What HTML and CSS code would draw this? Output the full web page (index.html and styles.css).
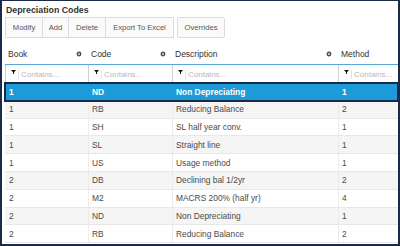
FILE: index.html
```html
<html>
	<head>
		<title>Depreciation Codes</title>
		<link rel="stylesheet" href="styles.css">
	</head>
	<body>
		<div class="frame">
			<div class="panel-title">Depreciation Codes</div>
			<div class="toolbar">
				<div class="btn-group">
					<div class="btn btn-modify">Modify</div>
					<div class="btn btn-add">Add</div>
					<div class="btn btn-delete">Delete</div>
					<div class="btn btn-export">Export To Excel</div>
				</div>
				<div class="btn btn-single">Overrides</div>
			</div>

			<div class="grid">
				<div class="grid-header">
					<div class="head-cell">Book <svg class="gear" width="6" height="6" viewBox="0 0 6 6"><circle cx="3" cy="3" r="1.8"></circle></svg></div>
					<div class="head-cell">Code <svg class="gear" width="6" height="6" viewBox="0 0 6 6"><circle cx="3" cy="3" r="1.8"></circle></svg></div>
					<div class="head-cell">Description <svg class="gear" width="6" height="6" viewBox="0 0 6 6"><circle cx="3" cy="3" r="1.8"></circle></svg></div>
					<div class="head-cell">Method</div>
				</div>
				<div class="filter-row">
					<div class="filter-cell"><svg class="funnel" width="5" height="4" viewBox="0 0 5 4"><path d="M0 0 H5 L3 2.2 V4 H2 V2.2 Z"></path></svg><span class="placeholder">Contains...</span></div>
					<div class="filter-cell"><svg class="funnel" width="5" height="4" viewBox="0 0 5 4"><path d="M0 0 H5 L3 2.2 V4 H2 V2.2 Z"></path></svg><span class="placeholder">Contains...</span></div>
					<div class="filter-cell"><svg class="funnel" width="5" height="4" viewBox="0 0 5 4"><path d="M0 0 H5 L3 2.2 V4 H2 V2.2 Z"></path></svg><span class="placeholder">Contains...</span></div>
					<div class="filter-cell"><svg class="funnel" width="5" height="4" viewBox="0 0 5 4"><path d="M0 0 H5 L3 2.2 V4 H2 V2.2 Z"></path></svg><span class="placeholder">Contains...</span></div>
				</div>

				<div class="row selected"><div class="cell">1</div><div class="cell">ND</div><div class="cell">Non Depreciating</div><div class="cell">1</div></div>
				<div class="row alt"><div class="cell">1</div><div class="cell">RB</div><div class="cell">Reducing Balance</div><div class="cell">2</div></div>
				<div class="row"><div class="cell">1</div><div class="cell">SH</div><div class="cell">SL half year conv.</div><div class="cell">1</div></div>
				<div class="row alt"><div class="cell">1</div><div class="cell">SL</div><div class="cell">Straight line</div><div class="cell">1</div></div>
				<div class="row"><div class="cell">1</div><div class="cell">US</div><div class="cell">Usage method</div><div class="cell">1</div></div>
				<div class="row alt"><div class="cell">2</div><div class="cell">DB</div><div class="cell">Declining bal 1/2yr</div><div class="cell">2</div></div>
				<div class="row"><div class="cell">2</div><div class="cell">M2</div><div class="cell">MACRS 200% (half yr)</div><div class="cell">4</div></div>
				<div class="row alt"><div class="cell">2</div><div class="cell">ND</div><div class="cell">Non Depreciating</div><div class="cell">1</div></div>
				<div class="row"><div class="cell">2</div><div class="cell">RB</div><div class="cell">Reducing Balance</div><div class="cell">2</div></div>
			</div>
		</div>
	</body>
</html>
```

FILE: styles.css
```css
body {
	margin: 0px;
	font-family: "Liberation Sans", Arial, sans-serif;
	background: #ffffff;
}
.frame {
	width: 400px;
	height: 246px;
	box-sizing: border-box;
	border: 2px solid #1c2a49;
	border-top-width: 1px;
	padding-left: 3px;
	overflow: hidden;
	background: #ffffff;
}
.panel-title {
	padding-top: 2px;
	padding-left: 1px;
	height: 14px;
	line-height: 14px;
	font-size: 8.8px;
	font-weight: bold;
	color: #333;
}
.toolbar {
	display: flex;
	gap: 3px;
	height: 21px;
}
.btn-group {
	display: flex;
}
.btn {
	display: flex;
	align-items: center;
	justify-content: center;
	box-sizing: border-box;
	height: 21px;
	font-size: 7.6px;
	color: #555;
	background: #fafafa;
	border: 1px solid #dcdcdc;
}
.btn-group .btn + .btn {
	border-left: none;
}
.btn-modify { width: 38px; }
.btn-add { width: 26px; }
.btn-delete { width: 37px; }
.btn-export { width: 68px; }
.btn-single {
	width: 48px;
	border-radius: 2px;
}

.grid {
	margin-top: 6px;
}
.grid-header,
.filter-row,
.row {
	display: grid;
	grid-template-columns: 83px 84px 166px 60px;
}
.grid-header {
	height: 20px;
	border-bottom: 1px solid #5aa6da;
}
.head-cell {
	display: flex;
	align-items: center;
	justify-content: space-between;
	padding: 0 6px 0 3px;
	font-size: 8.5px;
	color: #333;
}
.gear circle {
	fill: #bbb;
	stroke: #444;
	stroke-width: 1.2;
}
.filter-row {
	height: 18px;
	box-sizing: border-box;
	border-bottom: 1px solid #cfcfcf;
}
.filter-cell {
	display: flex;
	align-items: center;
	padding-left: 5px;
	border-left: 1px solid #d0d0d0;
	background: #ffffff;
}
.funnel {
	fill: #111;
	margin-top: -4px;
	margin-right: 2px;
}
.placeholder {
	font-size: 8px;
	color: #b8b8b8;
	padding-left: 2px;
	border-left: 1px solid #e2e2e2;
	line-height: 9px;
	margin-top: 2px;
}

.row {
	height: 17.8px;
	box-sizing: border-box;
	border-bottom: 1px solid #e8e8e8;
	font-size: 8.4px;
	color: #4a4a4a;
}
.row.alt {
	background: #f5f5f5;
}
.cell {
	display: flex;
	align-items: center;
	padding-left: 3px;
	border-left: 1px solid #ececec;
	white-space: nowrap;
}
.cell:first-child {
	border-left: none;
	padding-left: 4px;
}
.row.selected {
	background: #1d9ad8;
	color: #ffffff;
	font-weight: bold;
	outline: 2px solid #1b2a48;
	outline-offset: -1px;
	border-bottom: none;
}
.row.selected .cell {
	border-left-color: #1d9ad8;
}
```
